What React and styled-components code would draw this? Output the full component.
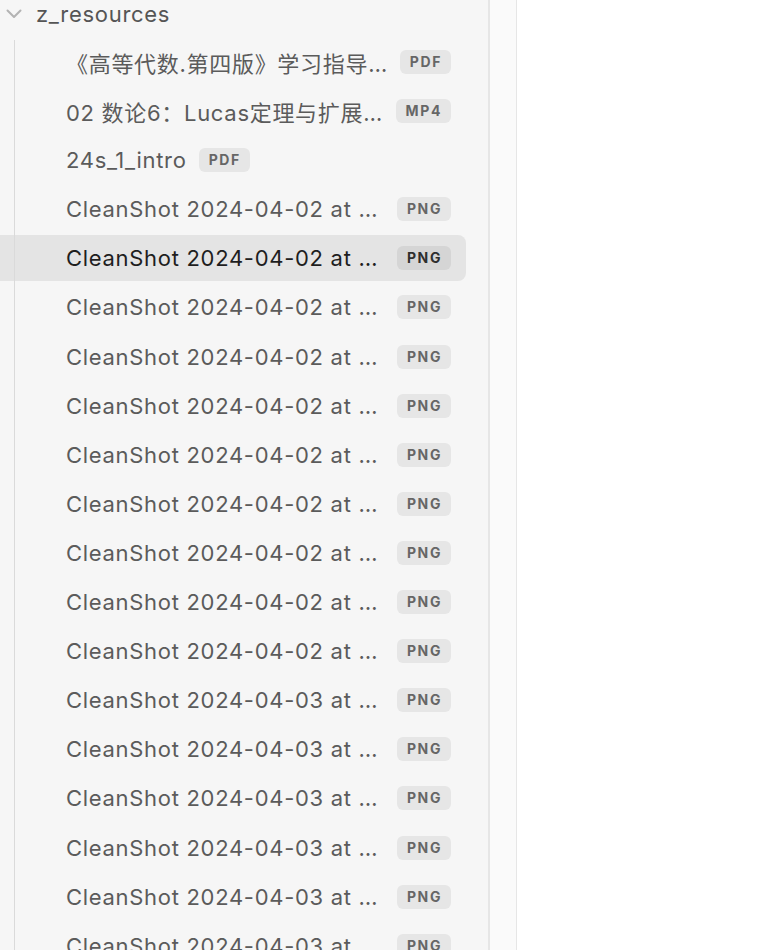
import React from "react";
import styled, { createGlobalStyle } from "styled-components";

const Global = createGlobalStyle`
  html, body { margin: 0; padding: 0; background: #ffffff; overflow: hidden; }
  #root { height: 950px; }
`;

const Layout = styled.div`
  display: flex;
  height: 950px;
  font-family: Inter, "Noto Sans CJK SC", sans-serif;
`;

const Sidebar = styled.aside`
  width: 488px;
  flex: none;
  background: #f6f6f6;
  border-right: 2px solid #e6e6e6;
  overflow: hidden;
`;

const Gutter = styled.div`
  width: 26px;
  flex: none;
  background: #fafafa;
  border-right: 1px solid #e6e6e6;
`;

const Main = styled.main`
  flex: 1;
  background: #ffffff;
`;

const FolderHeader = styled.div`
  display: flex;
  align-items: center;
  height: 28px;
  padding-left: 6px;
  gap: 14px;
  color: #555555;
  font-size: 22px;
  letter-spacing: 0.7px;
`;

const Chevron = styled.svg`
  width: 16px;
  height: 10px;
  flex: none;
`;

const Children = styled.div`
  position: relative;
  padding-top: 11px;
  &::before {
    content: "";
    position: absolute;
    left: 14px;
    top: 12px;
    bottom: 0;
    width: 1px;
    background: #dadada;
    z-index: 1;
  }
`;

const Row = styled.div`
  display: flex;
  align-items: center;
  height: 46px;
  margin: 0 22px 3.1px 0;
  padding: 0 15px 0 66px;
  border-radius: 0 8px 8px 0;
  background: ${(p) => (p.$active ? "#e4e4e4" : "transparent")};
  color: ${(p) => (p.$active ? "#1e1e1e" : "#5b5b5b")};
  font-size: 22px;
`;

const Name = styled.span`
  flex: 0 1 auto;
  min-width: 0;
  white-space: nowrap;
  overflow: hidden;
  text-overflow: ellipsis;
  letter-spacing: 0.7px;
`;

const Badge = styled.span`
  flex: none;
  margin-left: 12px;
  height: 24px;
  padding: 0 9px 0 10px;
  display: inline-flex;
  align-items: center;
  border-radius: 6px;
  background: ${(p) => (p.$active ? "#d5d5d5" : "#e6e6e6")};
  color: ${(p) => (p.$active ? "#2e2e2e" : "#666666")};
  font-size: 14px;
  font-weight: 700;
  letter-spacing: 1.6px;
  line-height: 1;
`;

const cs = (d, t) => `CleanShot 2024-04-${d} at ${t}@2x`;

const files = [
  { name: "《高等代数.第四版》学习指导与习题解答", ext: "PDF" },
  { name: "02 数论6：Lucas定理与扩展Lucas定理", ext: "MP4" },
  { name: "24s_1_intro", ext: "PDF" },
  { name: cs("02", "10.12.33"), ext: "PNG" },
  { name: cs("02", "10.15.08"), ext: "PNG", active: true },
  { name: cs("02", "10.21.44"), ext: "PNG" },
  { name: cs("02", "10.30.12"), ext: "PNG" },
  { name: cs("02", "11.02.51"), ext: "PNG" },
  { name: cs("02", "11.17.26"), ext: "PNG" },
  { name: cs("02", "14.05.39"), ext: "PNG" },
  { name: cs("02", "15.48.03"), ext: "PNG" },
  { name: cs("02", "16.22.17"), ext: "PNG" },
  { name: cs("02", "20.41.55"), ext: "PNG" },
  { name: cs("03", "09.12.40"), ext: "PNG" },
  { name: cs("03", "09.33.21"), ext: "PNG" },
  { name: cs("03", "10.04.18"), ext: "PNG" },
  { name: cs("03", "10.47.06"), ext: "PNG" },
  { name: cs("03", "11.26.52"), ext: "PNG" },
  { name: cs("03", "13.09.31"), ext: "PNG" },
];

export default function App() {
  return (
    <>
      <Global />
      <Layout>
        <Sidebar>
          <FolderHeader>
            <Chevron viewBox="0 0 16 10">
              <path d="M1.5 1.5 L8 8 L14.5 1.5" fill="none" stroke="#b3b3b3" strokeWidth="2" strokeLinecap="round" strokeLinejoin="round" />
            </Chevron>
            <span>z_resources</span>
          </FolderHeader>
          <Children>
            {files.map((f, i) => (
              <Row key={i} $active={f.active}>
                <Name>{f.name}</Name>
                <Badge $active={f.active}>{f.ext}</Badge>
              </Row>
            ))}
          </Children>
        </Sidebar>
        <Gutter />
        <Main />
      </Layout>
    </>
  );
}
